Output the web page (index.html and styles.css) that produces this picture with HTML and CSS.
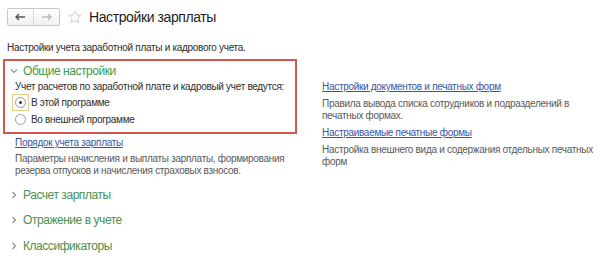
FILE: index.html
```html
<!DOCTYPE html>
<html lang="ru">
<head>
    <meta charset="UTF-8">
    <title>Настройки зарплаты</title>
    <link rel="stylesheet" href="styles.css">
</head>
<body>
    <div class="header">
        <div class="nav">
            <span class="nav-btn">
                <svg width="11" height="8" viewBox="0 0 11 8"><path d="M1 4h9M4 1L1 4l3 3" fill="none" stroke="#555" stroke-width="1.4"/></svg>
            </span>
            <span class="nav-btn">
                <svg width="11" height="8" viewBox="0 0 11 8"><path d="M1 4h9M7 1l3 3-3 3" fill="none" stroke="#bbb" stroke-width="1.4"/></svg>
            </span>
        </div>
        <svg class="star" width="14" height="14" viewBox="0 0 14 14"><path d="M7 1l1.8 3.9 4.2.5-3.1 2.9.8 4.2L7 10.4 3.3 12.5l.8-4.2L1 5.4l4.2-.5z" fill="none" stroke="#c8c8c8" stroke-width="0.9"/></svg>
        <h1>Настройки зарплаты</h1>
    </div>

    <p class="subtitle">Настройки учета заработной платы и кадрового учета.</p>

    <div class="columns">
        <div class="left">
            <div class="group">
                <div class="group-title">
                    <svg class="chev" width="8" height="6" viewBox="0 0 8 6"><path d="M1 1.5l3 3 3-3" fill="none" stroke="#7a9a7a" stroke-width="1.1"/></svg>
                    Общие настройки
                </div>
                <div class="label">Учет расчетов по заработной плате и кадровый учет ведутся:</div>
                <div class="radio checked focused"><span class="circle"></span>В этой программе</div>
                <div class="radio"><span class="circle"></span>Во внешней программе</div>
            </div>
            <div class="item">
                <a href="#">Порядок учета зарплаты</a>
                <p>Параметры начисления и выплаты зарплаты, формирования резерва отпусков и начисления страховых взносов.</p>
            </div>
            <div class="sections">
                <div class="section">
                    <svg class="chev" width="6" height="8" viewBox="0 0 6 8"><path d="M1.5 1l3 3-3 3" fill="none" stroke="#8a8a8a" stroke-width="1.1"/></svg>
                    Расчет зарплаты
                </div>
                <div class="section">
                    <svg class="chev" width="6" height="8" viewBox="0 0 6 8"><path d="M1.5 1l3 3-3 3" fill="none" stroke="#8a8a8a" stroke-width="1.1"/></svg>
                    Отражение в учете
                </div>
                <div class="section">
                    <svg class="chev" width="6" height="8" viewBox="0 0 6 8"><path d="M1.5 1l3 3-3 3" fill="none" stroke="#8a8a8a" stroke-width="1.1"/></svg>
                    Классификаторы
                </div>
            </div>
        </div>
        <div class="right">
            <div class="item">
                <a href="#">Настройки документов и печатных форм</a>
                <p>Правила вывода списка сотрудников и подразделений в печатных формах.</p>
            </div>
            <div class="item">
                <a href="#">Настраиваемые печатные формы</a>
                <p>Настройка внешнего вида и содержания отдельных печатных форм</p>
            </div>
        </div>
    </div>
</body>
</html>
```

FILE: styles.css
```css
body {
    margin: 0;
    font-family: "Liberation Sans", Arial, sans-serif;
    font-size: 10px;
    letter-spacing: -0.3px;
    color: #2e2e2e;
    background: #fff;
}
.header {
    display: flex;
    align-items: center;
    padding: 7px 7px 0 7px;
    height: 19px;
}
.nav {
    display: flex;
    border: 1px solid #c8c8c8;
    border-radius: 2px;
    background: linear-gradient(#fff, #f0f0f0);
}
.nav-btn {
    width: 25px;
    height: 16px;
    display: flex;
    align-items: center;
    justify-content: center;
}
.nav-btn + .nav-btn {
    border-left: 1px solid #d8d8d8;
}
.star {
    margin-left: 8px;
}
h1 {
    margin: 0 0 0 7px;
    font-size: 14px;
    letter-spacing: -0.4px;
    font-weight: normal;
    color: #1e1e1e;
}
.subtitle {
    margin: 15px 7px 0 7px;
    line-height: 13px;
}
.columns {
    display: flex;
    margin-top: 5px;
}
.left {
    width: 294px;
    margin-left: 3px;
}
.right {
    margin-left: 25px;
    padding-top: 21px;
    width: 272px;
}
.group {
    border: 2px solid #d4574c;
    padding: 2px 0 4px 10px;
}
.group-title {
    display: flex;
    align-items: center;
    font-size: 12px;
    letter-spacing: -0.45px;
    color: #3f9a4a;
    height: 16px;
    margin-left: -5px;
}
.group-title .chev {
    margin-right: 5px;
}
.label {
    margin-top: 1px;
    line-height: 14px;
}
.radio {
    display: flex;
    align-items: center;
    height: 17px;
    position: relative;
}
.circle {
    width: 11px;
    height: 11px;
    box-sizing: border-box;
    border: 1px solid #999;
    border-radius: 50%;
    margin-right: 5px;
    background: #fff;
    position: relative;
}
.checked .circle::after {
    content: "";
    position: absolute;
    left: 3px;
    top: 3px;
    width: 3px;
    height: 3px;
    border-radius: 50%;
    background: #3a3a3a;
}
.focused::before {
    content: "";
    position: absolute;
    left: -3px;
    top: 0;
    width: 17px;
    height: 17px;
    border: 1px solid #e8cf85;
    box-sizing: border-box;
}
.item {
    margin: 2px 0 0 12px;
}
.right .item {
    margin: 0 0 4px 0;
}
.item a {
    display: block;
    color: #3a55a0;
    text-decoration: underline;
    line-height: 14px;
}
.item p {
    margin: 3px 0 0 0;
    color: #5a5a5a;
    line-height: 12px;
}
.right .item p {
    margin-top: 4px;
}
.sections {
    margin: 5px 0 0 8px;
}
.section {
    display: flex;
    align-items: center;
    font-size: 12px;
    letter-spacing: -0.45px;
    color: #4a9050;
    height: 25.5px;
}
.section .chev {
    margin-right: 6px;
}
```
